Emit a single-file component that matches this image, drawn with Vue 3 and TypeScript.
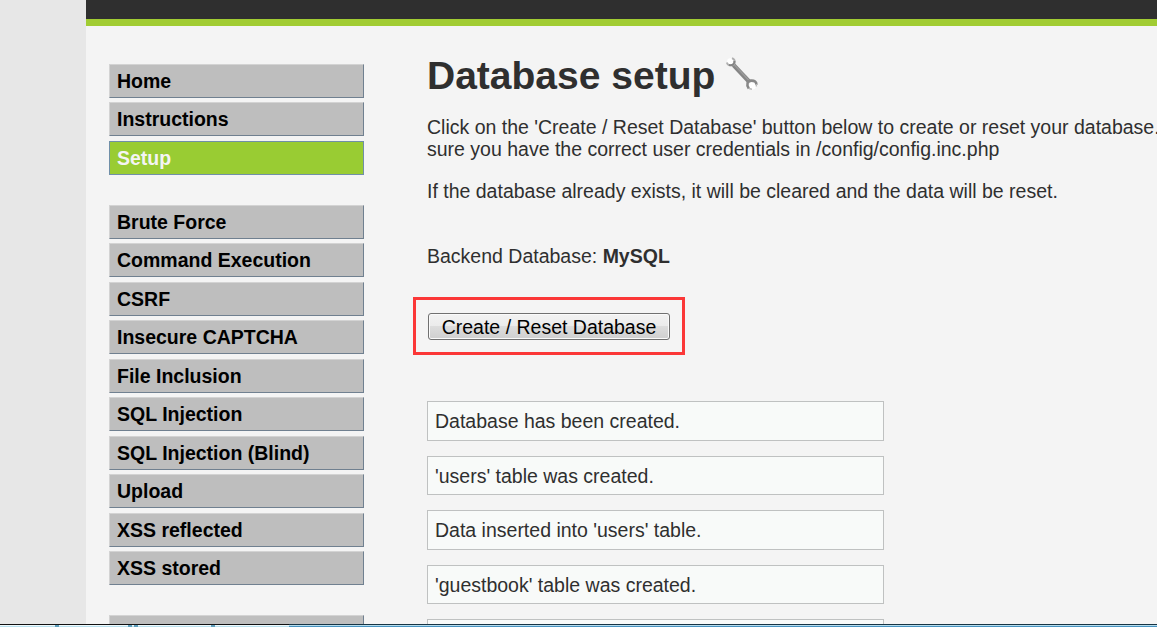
<script setup lang="ts">
interface MenuItem { label: string; active?: boolean }
const groups: MenuItem[][] = [
  [{ label: 'Home' }, { label: 'Instructions' }, { label: 'Setup', active: true }],
  [
    { label: 'Brute Force' }, { label: 'Command Execution' }, { label: 'CSRF' },
    { label: 'Insecure CAPTCHA' }, { label: 'File Inclusion' }, { label: 'SQL Injection' },
    { label: 'SQL Injection (Blind)' }, { label: 'Upload' }, { label: 'XSS reflected' },
    { label: 'XSS stored' },
  ],
  [{ label: '' }],
]
const messages: string[] = [
  'Database has been created.',
  "'users' table was created.",
  "Data inserted into 'users' table.",
  "'guestbook' table was created.",
  '',
]
const tabs: number[] = [55, 128, 134, 211]
</script>

<template>
  <div class="screen">
    <div class="page">
      <header class="header"></header>
      <div class="body">
        <nav class="menu">
          <ul v-for="(group, g) in groups" :key="g" class="group">
            <li v-for="(item, i) in group" :key="i" class="item" :class="{ active: item.active }">{{ item.label }}</li>
          </ul>
        </nav>
        <main class="content">
          <h1 class="title">
            <span>Database setup</span>
            <svg class="wrench" width="32" height="34" viewBox="0 0 32 34">
              <circle cx="4.2" cy="4.2" r="3" fill="#fff" />
              <circle cx="26.5" cy="29" r="3.4" fill="#fff" />
              <path d="M7.5 8 L23 24.5" stroke="#858585" stroke-width="4.4" fill="none" />
              <path d="M8.5 8 L23.5 24" stroke="#9c9c9c" stroke-width="1.2" fill="none" />
              <path d="M0.8 5.5 C2 9.5 7.5 9.5 8.6 6.2 C9.2 4 8 2 6 1.2" stroke="#b0b0b0" stroke-width="1.8" fill="none" />
              <path d="M3 8 C7 8.6 8.6 7 8.4 4" stroke="#858585" stroke-width="2" fill="none" />
              <path d="M22.8 31.5 C20 27.5 21.5 23.8 25.2 23.6 C28.5 23.4 30.5 25 30.4 27.8" stroke="#888" stroke-width="2.6" fill="none" />
              <path d="M23 31.5 L26 32.2 M30.2 27 L30.4 29.5" stroke="#bbb" stroke-width="1.4" fill="none" />
            </svg>
          </h1>
          <p class="intro">Click on the 'Create / Reset Database' button below to create or reset your database.<br />sure you have the correct user credentials in /config/config.inc.php</p>
          <p class="note">If the database already exists, it will be cleared and the data will be reset.</p>
          <p class="backend">Backend Database: <b>MySQL</b></p>
          <div class="highlight"><button class="create" type="button">Create / Reset Database</button></div>
          <div class="messages">
            <div v-for="(m, i) in messages" :key="i" class="message">{{ m }}</div>
          </div>
        </main>
      </div>
    </div>
    <div class="taskbar">
      <div class="strip"></div>
      <i v-for="x in tabs" :key="x" class="notch" :style="{ left: x + 'px' }"></i>
    </div>
  </div>
</template>

<style>
body { margin: 0; overflow: hidden; }
</style>

<style scoped>
.screen {
  position: relative;
  width: 1157px;
  height: 627px;
  overflow: hidden;
  background: #e7e7e7;
  color: #2f2f2f;
  font-family: "Liberation Sans", Arial, sans-serif;
  font-size: 19.5px;
  line-height: 22px;
  white-space: nowrap;
}
.page { margin-left: 86px; height: 627px; background: #f4f4f4; overflow: hidden; }
.header { height: 19px; background: #2f2f2f; border-bottom: 7px solid #a1cc33; }
.body { display: flex; padding-left: 23px; }
.menu { width: 255px; padding-top: 37.9px; flex: none; }
.group { list-style: none; margin: 0 0 30px; padding: 0; display: grid; gap: 4.5px; }
.item {
  box-sizing: border-box;
  height: 34px;
  padding: 5px 7px;
  background: #bebebe;
  border: 1px solid;
  border-color: #d3d3d3 #708090 #708090 #d3d3d3;
  color: #000;
  font-weight: bold;
}
.item.active { background: #99cc33; border-color: #708fa8; color: #f4f4f4; }
.content { margin-left: 63px; padding-top: 26px; flex: none; width: 760px; }
.title { display: flex; margin: 0; height: 48px; font-size: 39px; line-height: 48px; }
.wrench { margin: 5px 0 0 11px; }
p { margin: 0; }
.intro { margin-top: 16px; }
.note { margin-top: 20px; }
.backend { margin-top: 43px; }
.highlight {
  box-sizing: border-box;
  width: 272px;
  height: 58px;
  margin: 30px 0 0 -14px;
  border: 3px solid #fb3737;
  padding: 13px 12px;
}
.create {
  display: block;
  box-sizing: border-box;
  width: 242px;
  height: 27px;
  padding: 0;
  border: 1px solid #707070;
  border-radius: 3px;
  background: linear-gradient(#f2f2f2, #ebebeb 50%, #dddddd 50%, #cfcfcf);
  box-shadow: inset 0 0 0 1px #fafafa;
  color: #000;
  font: 19.5px/22px "Liberation Sans", Arial, sans-serif;
}
.messages { display: grid; gap: 15px; margin-top: 46px; }
.message {
  box-sizing: border-box;
  width: 457px;
  height: 39.5px;
  padding: 8px 7px;
  border: 1px solid #bfc1c1;
  background: #f8faf9;
}
.taskbar {
  position: absolute;
  left: 0;
  bottom: 0;
  width: 1157px;
  height: 3px;
  background: linear-gradient(#173444 0 1px, #b5dced 1px 2px, #4994c1 2px);
}
.strip { width: 289px; height: 3px; background: linear-gradient(#111 0 1px, #edf8fc 1px 2px, #b8dfed 2px); }
.notch { position: absolute; top: 1px; width: 4px; height: 2px; background: #5f9fbd; }
</style>
